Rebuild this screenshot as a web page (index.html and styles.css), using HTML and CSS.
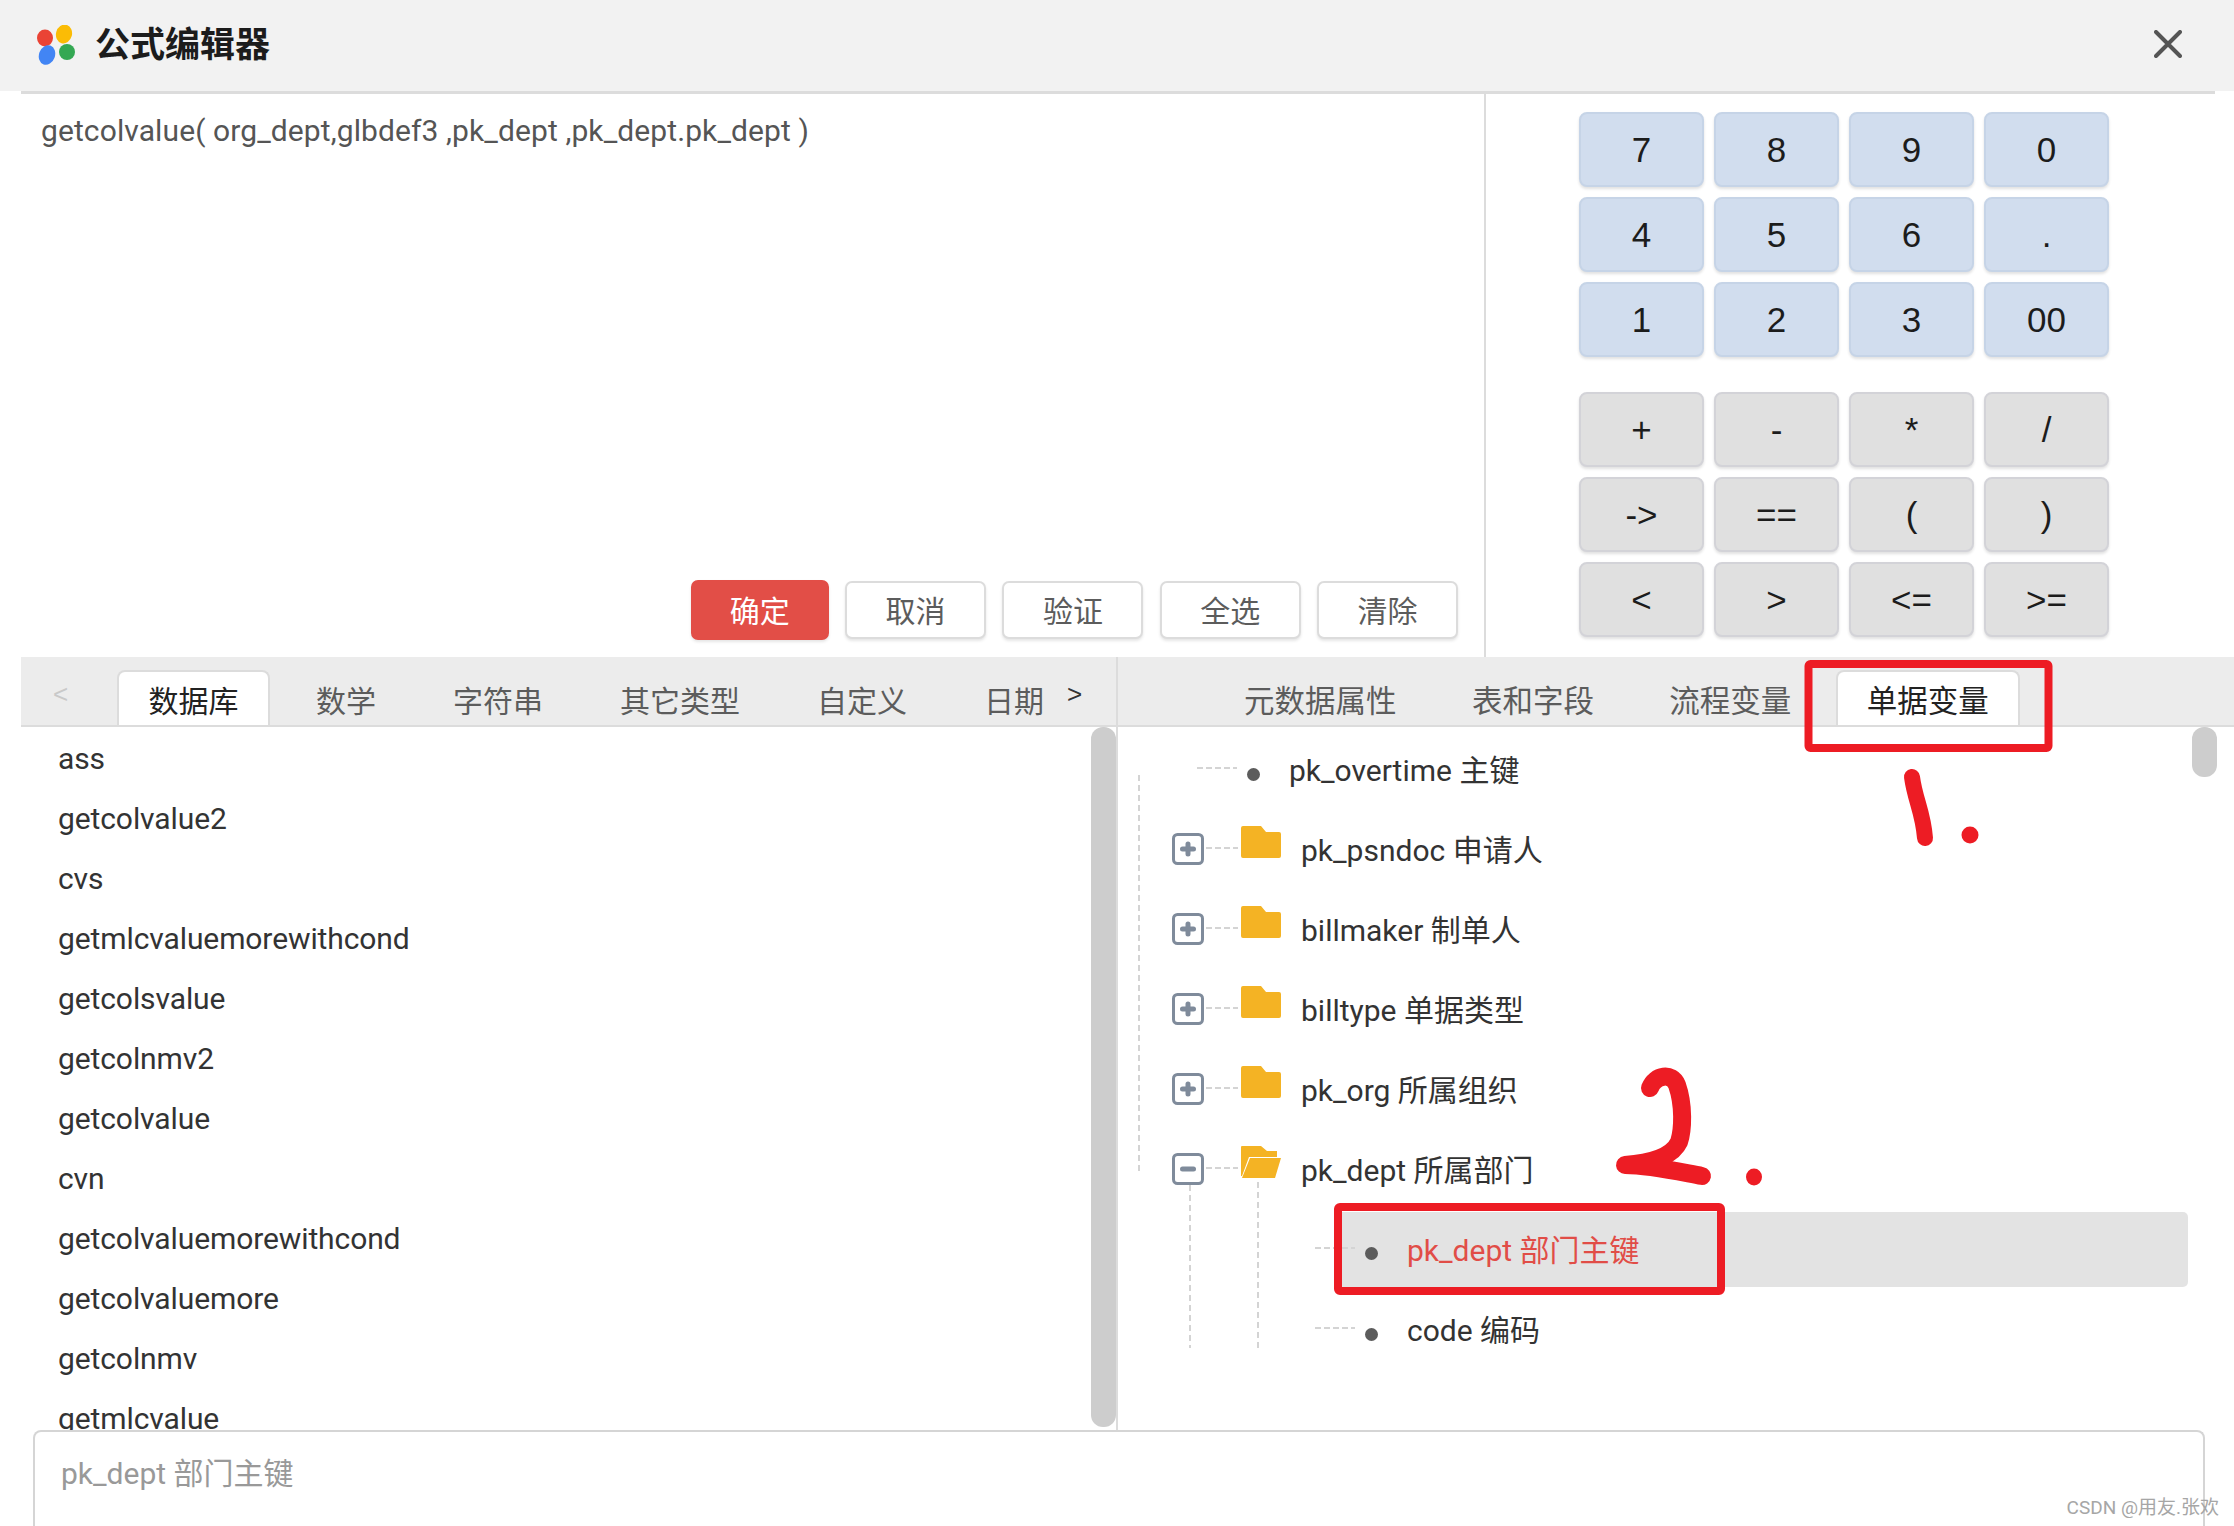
FILE: index.html
```html
<!DOCTYPE html>
<html lang="zh">
<head>
<meta charset="utf-8">
<title>公式编辑器</title>
<link rel="stylesheet" href="styles.css">
</head>
<body>
<div class="dialog">
  <header class="head">
    <svg class="logo" width="38" height="40" viewBox="0 0 38 40">
      <ellipse cx="8" cy="13" rx="8" ry="8.5" fill="#ea4335"/>
      <ellipse cx="27" cy="9" rx="8" ry="9.5" fill="#fbbc05" transform="rotate(15 27 9)"/>
      <ellipse cx="10" cy="30" rx="8" ry="10" fill="#4285f4" transform="rotate(20 10 30)"/>
      <ellipse cx="30" cy="27" rx="8" ry="8" fill="#34a853"/>
    </svg>
    <h1 class="title">公式编辑器</h1>
    <svg class="close" width="28" height="28" viewBox="0 0 28 28"><path d="M2 2 26 26M26 2 2 26" stroke="#555" stroke-width="4" stroke-linecap="round"/></svg>
  </header>
  <div class="head-rule"></div>

  <section class="top">
    <div class="editor">
      <div class="formula">getcolvalue( org_dept,glbdef3 ,pk_dept ,pk_dept.pk_dept )</div>
      <div class="actions">
        <button class="btn primary">确定</button>
        <button class="btn">取消</button>
        <button class="btn">验证</button>
        <button class="btn">全选</button>
        <button class="btn">清除</button>
      </div>
    </div>
    <div class="calc">
      <div class="keys">
        <button class="key num">7</button><button class="key num">8</button><button class="key num">9</button><button class="key num">0</button>
        <button class="key num">4</button><button class="key num">5</button><button class="key num">6</button><button class="key num">.</button>
        <button class="key num">1</button><button class="key num">2</button><button class="key num">3</button><button class="key num">00</button>
      </div>
      <div class="keys">
        <button class="key op">+</button><button class="key op">-</button><button class="key op">*</button><button class="key op">/</button>
        <button class="key op">-&gt;</button><button class="key op">==</button><button class="key op">(</button><button class="key op">)</button>
        <button class="key op">&lt;</button><button class="key op">&gt;</button><button class="key op">&lt;=</button><button class="key op">&gt;=</button>
      </div>
    </div>
  </section>

  <section class="mid">
    <div class="pane pane-left">
      <nav class="tabs tabs-left">
        <span class="arrow prev">&lt;</span>
        <span class="tab active">数据库</span>
        <span class="tab">数学</span>
        <span class="tab">字符串</span>
        <span class="tab">其它类型</span>
        <span class="tab">自定义</span>
        <span class="tab">日期</span>
        <span class="arrow next">&gt;</span>
      </nav>
      <ul class="list">
        <li>ass</li>
        <li>getcolvalue2</li>
        <li>cvs</li>
        <li>getmlcvaluemorewithcond</li>
        <li>getcolsvalue</li>
        <li>getcolnmv2</li>
        <li>getcolvalue</li>
        <li>cvn</li>
        <li>getcolvaluemorewithcond</li>
        <li>getcolvaluemore</li>
        <li>getcolnmv</li>
        <li>getmlcvalue</li>
      </ul>
      <div class="scrollbar sb-left"></div>
    </div>
    <div class="pane pane-right">
      <nav class="tabs tabs-right">
        <span class="tab">元数据属性</span>
        <span class="tab">表和字段</span>
        <span class="tab">流程变量</span>
        <span class="tab active">单据变量</span>
      </nav>
      <div class="tree">
        <i class="vline v1"></i><i class="vline v2"></i><i class="vline v3"></i>
        <div class="row leaf lv1"><i class="dash"></i><i class="dot"></i><span class="label">pk_overtime 主键</span></div>
        <div class="row"><svg class="toggle" width="32" height="32" viewBox="0 0 32 32"><use href="#box"/><path d="M10.5 16H21.5M16 11V21" class="sign"/></svg><i class="dash"></i>
          <svg class="folder" width="40" height="32" viewBox="0 0 40 32"><use href="#closed"/></svg><span class="label">pk_psndoc 申请人</span></div>
        <div class="row"><svg class="toggle" width="32" height="32" viewBox="0 0 32 32"><use href="#box"/><path d="M10.5 16H21.5M16 11V21" class="sign"/></svg><i class="dash"></i>
          <svg class="folder" width="40" height="32" viewBox="0 0 40 32"><use href="#closed"/></svg><span class="label">billmaker 制单人</span></div>
        <div class="row"><svg class="toggle" width="32" height="32" viewBox="0 0 32 32"><use href="#box"/><path d="M10.5 16H21.5M16 11V21" class="sign"/></svg><i class="dash"></i>
          <svg class="folder" width="40" height="32" viewBox="0 0 40 32"><use href="#closed"/></svg><span class="label">billtype 单据类型</span></div>
        <div class="row"><svg class="toggle" width="32" height="32" viewBox="0 0 32 32"><use href="#box"/><path d="M10.5 16H21.5M16 11V21" class="sign"/></svg><i class="dash"></i>
          <svg class="folder" width="40" height="32" viewBox="0 0 40 32"><use href="#closed"/></svg><span class="label">pk_org 所属组织</span></div>
        <div class="row"><svg class="toggle" width="32" height="32" viewBox="0 0 32 32"><use href="#box"/><path d="M10.5 16H21.5" class="sign"/></svg><i class="dash"></i>
          <svg class="folder" width="40" height="32" viewBox="0 0 40 32"><path d="M0 1a1 1 0 0 1 1-1H20l6 5H36V11H8L1 30H0Z" fill="#f4b324"/><path d="M9 12H40L34 32H1Z" fill="#f4b324"/></svg><span class="label">pk_dept 所属部门</span></div>
        <div class="row leaf lv2 selected"><i class="dash"></i><i class="dot"></i><span class="label">pk_dept 部门主键</span></div>
        <div class="row leaf lv2"><i class="dash"></i><i class="dot"></i><span class="label">code 编码</span></div>
      </div>
      <div class="scrollbar sb-right"></div>
    </div>
  </section>

  <div class="desc">pk_dept 部门主键</div>
</div>

<svg class="defs" width="0" height="0">
  <defs>
    <rect id="box" x="1.5" y="1.5" width="29" height="29" rx="4" fill="#fff" stroke="#7f8b9b" stroke-width="3"/>
    <path id="closed" d="M0 2a2 2 0 0 1 2-2H20l5 6H38a2 2 0 0 1 2 2V30a2 2 0 0 1-2 2H2a2 2 0 0 1-2-2Z" fill="#f4b324"/>
  </defs>
</svg>

<svg class="annot" width="2234" height="1526" viewBox="0 0 2234 1526">
  <rect x="1808.5" y="664" width="240" height="84" rx="2" class="mark-box"/>
  <rect x="1338" y="1207" width="383" height="84" rx="2" class="mark-box"/>
  <path d="M1912 777C1915 800 1923 812 1925 838" class="ink"/>
  <ellipse cx="1970" cy="835" rx="8.5" ry="8.5" fill="#ed1c24"/>
  <path d="M1650 1088C1655 1075 1672 1072 1677 1085C1684 1105 1683 1130 1679 1142C1672 1157 1650 1163 1625 1165C1650 1165 1680 1172 1702 1176" class="ink ink2"/>
  <ellipse cx="1754" cy="1177" rx="8" ry="8.5" fill="#ed1c24"/>
</svg>
<div class="watermark">CSDN @用友.张欢</div>
</body>
</html>
```
FILE: styles.css
```css
* { box-sizing: border-box; }
html, body { margin: 0; padding: 0; }
body {
  width: 2234px; height: 1526px; overflow: hidden; position: relative;
  background: #fff; color: #333;
  font-family: "Roboto", "Noto Sans CJK SC", sans-serif;
  font-size: 30px;
}
.dialog { display: flex; flex-direction: column; width: 2234px; height: 1526px; }

.head { height: 91px; background: #f2f2f2; display: flex; align-items: center; padding: 0 52px 0 37px; flex: none; }
.logo { flex: none; margin-top: -2px; }
.title { margin: 0 0 0 20px; font-size: 35px; font-weight: 700; color: #1c1c1c; line-height: 40px; }
.close { margin-left: auto; margin-top: -4px; }
.head-rule { height: 3px; margin: 0 19px 0 21px; background: #dcdcdc; flex: none; }

.top { display: flex; height: 563px; margin-left: 21px; flex: none; }
.editor { width: 1465px; border-right: 2px solid #dcdcdc; display: flex; flex-direction: column; justify-content: space-between; padding: 17px 26px 17px 20px; }
.formula { line-height: 40px; color: #555; letter-spacing: .1px; }
.actions { display: flex; justify-content: flex-end; align-items: center; gap: 16.3px; }
.btn { width: 141px; height: 58px; border: 2px solid #dcdcdc; border-radius: 7px; background: #fff; color: #5c5c5c; font: inherit; padding: 0 0 2px; box-shadow: 0 2px 3px rgba(0,0,0,.1); }
.btn.primary { width: 138px; height: 60px; background: #e24e47; border-color: #e24e47; color: #fff; }

.calc { padding: 18px 0 0 93px; display: flex; flex-direction: column; gap: 35px; }
.keys { display: grid; grid-template-columns: repeat(4, 125px); grid-auto-rows: 75px; gap: 10px 10px; }
.key { border-radius: 8px; padding: 0; font-family: "Liberation Sans", sans-serif; font-size: 35px; color: #1c1c1c; box-shadow: 0 2px 3px rgba(0,0,0,.12); }
.num { background: #d1ddee; border: 2px solid #c6d4e7; }
.op { background: #e0e0e0; border: 2px solid #d3d3d8; }

.mid { display: flex; height: 773px; margin-left: 21px; flex: none; }
.pane { position: relative; overflow: hidden; }
.pane-left { width: 1097px; border-right: 2px solid #dcdcdc; }
.pane-right { flex: 1; }

.tabs { height: 70px; background: #ececec; border-bottom: 2px solid #dcdcdc; display: flex; align-items: flex-end; white-space: nowrap; }
.tabs-left { padding-left: 32px; gap: 15px; }
.tabs-right { padding-left: 95px; gap: 13.4px; font-size: 30.5px; }
.tab { height: 55px; padding: 0 29px; line-height: 60px; color: #5c5c5c; border: 2px solid transparent; border-bottom: 0; border-radius: 8px 8px 0 0; display: block; }
.tab.active { background: #fff; color: #222; border-color: #dcdcdc; }
.tabs-left .tab.active { padding: 0 29.5px; }
.arrow { font-family: "Liberation Sans", sans-serif; font-size: 26px; line-height: 30px; align-self: flex-start; margin-top: 22px; }
.prev { color: #c9c9c9; margin-right: 33px; width: 16px; }
.next { color: #333; margin-left: -23px; }

.list { list-style: none; margin: 0; padding: 2px 0 0 37px; letter-spacing: -.1px; }
.list li { height: 60px; line-height: 60px; color: #333; }

.scrollbar { position: absolute; background: #cdcdcd; border-radius: 12px; width: 25px; }
.sb-left { right: 0; top: 70px; height: 700px; }
.sb-right { right: 17px; top: 70px; height: 50px; }

.tree { position: relative; padding-top: 3px; }
.row { display: flex; align-items: center; height: 80px; padding-left: 54px; color: #333; }
.toggle { flex: none; margin-bottom: 3px; }
.sign { stroke: #7f8b9b; stroke-width: 5; stroke-linecap: round; fill: none; }
.dash { width: 32px; height: 2px; margin: 0 0 4px 2px; background: repeating-linear-gradient(to right, #d4d4d4 0 6px, transparent 6px 9px); flex: none; display: block; }
.folder { flex: none; margin: 0 0 16px 3px; }
.label { margin: 2px 0 0 20px; line-height: 40px; white-space: nowrap; }
.dot { width: 13px; height: 13px; border-radius: 50%; background: #5c5c5c; flex: none; display: block; margin: 8px 0 0 10px; }
.leaf .label { margin-left: 29px; }
.leaf .dash { width: 40px; margin-left: 0; }
.lv1 { padding-left: 79px; }
.lv2 { margin-left: 197px; padding-left: 0; }
.selected { margin: 2px 46px 3px 197px; height: 75px; background: linear-gradient(to right, transparent 26px, #e3e3e3 26px); border-radius: 0 5px 5px 0; }
.selected .label { color: #e14d47; }
.vline { position: absolute; width: 2px; display: block; background: repeating-linear-gradient(to bottom, #d4d4d4 0 6px, transparent 6px 10px); }
.v1 { left: 20px; top: 48px; height: 400px; }
.v2 { left: 71px; top: 458px; height: 163px; }
.v3 { left: 139px; top: 455px; height: 170px; }

.desc { flex: 1; margin: 0 29px 0 33px; padding: 22px 0 0 26px; border: 2px solid #d5d5d5; border-bottom: 0; border-radius: 8px 8px 0 0; color: #999; line-height: 40px; background: #fff; position: relative; }

.defs { position: absolute; }
.annot { position: absolute; left: 0; top: 0; pointer-events: none; }
.mark-box { fill: none; stroke: #ed1c24; stroke-width: 8; }
.ink { fill: none; stroke: #ed1c24; stroke-width: 16; stroke-linecap: round; stroke-linejoin: round; }
.ink2 { stroke-width: 18; }
.watermark { position: absolute; right: 15px; bottom: 8px; font-size: 19px; line-height: 20px; color: #a6a6a6; white-space: nowrap; }
```
